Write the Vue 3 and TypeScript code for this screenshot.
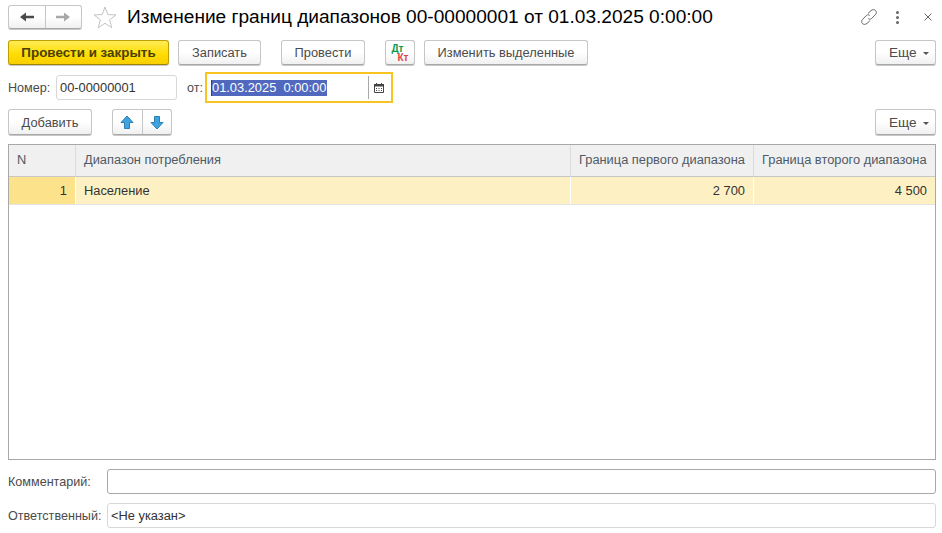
<script setup lang="ts">
interface Row { n: number; name: string; first: string; second: string }
const rows: Row[] = [{ n: 1, name: 'Население', first: '2 700', second: '4 500' }]
</script>

<template>
  <div class="page">
    <header class="title-row">
      <div class="nav">
        <button class="nav-btn">
          <svg width="16" height="12" viewBox="0 0 16 12"><path d="M1 6 L7 1.5 V4.8 H15 V7.2 H7 V10.5 Z" fill="#4a4a4a" /></svg>
        </button>
        <button class="nav-btn">
          <svg width="16" height="12" viewBox="0 0 16 12"><path d="M15 6 L9 1.5 V4.8 H1 V7.2 H9 V10.5 Z" fill="#a8a8a8" /></svg>
        </button>
      </div>
      <svg class="star" width="24" height="23" viewBox="0 0 24 23"><path d="M12 1 L14.8 8.6 L23 8.9 L16.6 13.9 L18.8 21.8 L12 17.3 L5.2 21.8 L7.4 13.9 L1 8.9 L9.2 8.6 Z" fill="#fff" stroke="#c4c4c4" stroke-width="1" /></svg>
      <h1 class="title">Изменение границ диапазонов 00-00000001 от 01.03.2025 0:00:00</h1>
      <div class="win-icons">
        <svg width="18" height="18" viewBox="0 0 18 18" fill="none" stroke="#666" stroke-width="1"><path d="M8 5.5 L11 2.6 C12.6 1.2 14.6 1.4 15.6 2.5 C16.7 3.7 16.6 5.5 15.4 6.7 L11.5 10.6 C10.4 11.6 9 11.4 8.3 10.4" /><path d="M10 12.5 L7 15.4 C5.4 16.8 3.4 16.6 2.4 15.5 C1.3 14.3 1.4 12.5 2.6 11.3 L6.5 7.4 C7.6 6.4 9 6.6 9.7 7.6" /></svg>
        <span class="dots"><i></i><i></i><i></i></span>
        <svg width="8" height="8" viewBox="0 0 8 8" stroke="#666" stroke-width="1"><path d="M0.5 0.5 L7.5 7.5 M7.5 0.5 L0.5 7.5" /></svg>
      </div>
    </header>

    <div class="toolbar cmd">
      <button class="btn primary">Провести и закрыть</button>
      <button class="btn save">Записать</button>
      <button class="btn post">Провести</button>
      <button class="btn dtkt"><span class="dt">Дт</span><span class="kt">Кт</span></button>
      <button class="btn change">Изменить выделенные</button>
      <button class="btn more">Еще<span class="caret"></span></button>
    </div>

    <div class="number-row">
      <label class="lbl num-lbl">Номер:</label>
      <div class="input number">00-00000001</div>
      <label class="lbl from">от:</label>
      <div class="date-focus">
        <div class="date-text"><span class="selected">01.03.2025&nbsp; 0:00:00</span></div>
        <span class="date-sep"></span>
        <svg class="cal" width="10" height="10" viewBox="0 0 10 10"><path d="M0.5 1.5 H9.5 V9.5 H0.5 Z" fill="#fff" stroke="#444" /><path d="M0 1 H10 V3.5 H0 Z M2 0 H3 V1 H2 Z M7 0 H8 V1 H7 Z" fill="#444" /><path d="M2 5 H3 V6 H2 Z M4.5 5 H5.5 V6 H4.5 Z M7 5 H8 V6 H7 Z M2 7 H3 V8 H2 Z M4.5 7 H5.5 V8 H4.5 Z M7 7 H8 V8 H7 Z" fill="#444" /></svg>
      </div>
    </div>

    <div class="toolbar table-bar">
      <button class="btn add">Добавить</button>
      <div class="updown">
        <button class="nav-btn ud">
          <svg width="14" height="15" viewBox="0 0 14 15"><path d="M7 1 L13 7.5 H9.5 V13.5 H4.5 V7.5 H1 Z" fill="#3fa3e0" stroke="#2b7fb5" stroke-width="1" /></svg>
        </button>
        <button class="nav-btn ud">
          <svg width="14" height="15" viewBox="0 0 14 15"><path d="M7 14 L13 7.5 H9.5 V1.5 H4.5 V7.5 H1 Z" fill="#3fa3e0" stroke="#2b7fb5" stroke-width="1" /></svg>
        </button>
      </div>
      <button class="btn more">Еще<span class="caret"></span></button>
    </div>

    <div class="grid">
      <div class="grid-row head">
        <div class="cell c-n">N</div>
        <div class="cell c-name">Диапазон потребления</div>
        <div class="cell c-a">Граница первого диапазона</div>
        <div class="cell c-b">Граница второго диапазона</div>
      </div>
      <div v-for="row in rows" :key="row.n" class="grid-row body">
        <div class="cell c-n num active">{{ row.n }}</div>
        <div class="cell c-name">{{ row.name }}</div>
        <div class="cell c-a num">{{ row.first }}</div>
        <div class="cell c-b num">{{ row.second }}</div>
      </div>
    </div>

    <div class="foot-row comment">
      <label class="lbl foot-lbl">Комментарий:</label>
      <div class="input wide dark"></div>
    </div>
    <div class="foot-row owner">
      <label class="lbl foot-lbl">Ответственный:</label>
      <div class="input wide">&lt;Не указан&gt;</div>
    </div>
  </div>
</template>

<style>
html, body { margin: 0; background: #fff; }
</style>

<style scoped>
.page {
  width: 942px;
  height: 533px;
  box-sizing: border-box;
  padding: 5px 6px 0 8px;
  overflow: hidden;
  font-family: "Liberation Sans", Arial, sans-serif;
  font-size: 12.85px;
  color: #4b4b4b;
  background: #fff;
}
.title-row { display: flex; align-items: center; height: 24px; }
.nav, .updown {
  display: flex;
  box-sizing: border-box;
  border: 1px solid #c6c6c6;
  border-bottom-color: #a8a8a8;
  border-radius: 3px;
  box-shadow: 0 1px 0 #c8c8c8;
  background: linear-gradient(#fff 50%, #f0f0f0);
}
.nav { width: 74px; height: 24px; }
.nav-btn {
  flex: 1;
  padding: 0;
  border: 0;
  background: none;
  display: flex;
  align-items: center;
  justify-content: center;
}
.nav-btn + .nav-btn { border-left: 1px solid #c6c6c6; }
.star { margin-left: 11px; flex: none; }
.title {
  margin: 0 0 0 10px;
  font-size: 19.1px;
  font-weight: 400;
  color: #000;
  white-space: nowrap;
  line-height: 24px;
}
.win-icons {
  margin-left: auto;
  margin-right: 4px;
  display: flex;
  align-items: center;
}
.dots { display: flex; flex-direction: column; gap: 2px; margin: 0 25px 0 18px; }
.dots i { display: block; width: 3px; height: 3px; border-radius: 50%; background: #666; }

.toolbar { display: flex; align-items: center; }
.cmd { margin-top: 11px; height: 25px; }
.table-bar { margin-top: 6px; height: 26px; }
.btn {
  box-sizing: border-box;
  height: 100%;
  padding: 0;
  border: 1px solid #c6c6c6;
  border-bottom-color: #a8a8a8;
  border-radius: 3px;
  box-shadow: 0 1px 0 #c8c8c8;
  background: linear-gradient(#fff 50%, #f0f0f0);
  font: inherit;
  color: #4b4b4b;
  white-space: nowrap;
}
.primary {
  width: 161px;
  border-color: #c0a000;
  border-bottom-color: #a08400;
  background: linear-gradient(#ffec55, #ffdc00 60%, #f8cf00);
  font-weight: 700;
  font-size: 13.4px;
  color: #4a4000;
}
.save { width: 83px; margin-left: 9px; }
.post { width: 84px; margin-left: 20px; }
.dtkt {
  width: 30px;
  margin-left: 20px;
  display: flex;
  flex-direction: column;
  align-items: center;
  justify-content: center;
  font-size: 10px;
  font-weight: 700;
  line-height: 9px;
}
.dt { color: #0a9a4a; margin-right: 5px; }
.kt { color: #e0474c; margin-left: 6px; }
.change { width: 164px; margin-left: 9px; }
.more { width: 61px; margin-left: auto; font-size: 13.6px; text-align: left; padding-left: 13px; }
.caret {
  display: inline-block;
  margin-left: 6px;
  vertical-align: 2px;
  border-left: 3px solid transparent;
  border-right: 3px solid transparent;
  border-top: 3px solid #555;
}

.number-row { display: flex; align-items: center; margin-top: 7px; height: 31px; }
.lbl { color: #4b4b4b; white-space: nowrap; font-size: 12.6px; }
.num-lbl { width: 48px; flex: none; }
.input {
  box-sizing: border-box;
  height: 25px;
  border: 1px solid #d8d8d8;
  border-radius: 3px;
  padding: 0 3px;
  line-height: 23px;
  color: #333;
  background: #fff;
}
.number { width: 121px; }
.from { margin-left: 10px; width: 18px; flex: none; }
.date-focus {
  box-sizing: border-box;
  width: 188px;
  height: 31px;
  border: 2px solid #f7c421;
  display: flex;
  align-items: center;
  padding: 0 0 0 5px;
}
.date-text { width: 156px; line-height: 16px; color: #fff; white-space: nowrap; }
.selected { display: inline-block; background: #5069bf; height: 16px; padding-right: 1px; box-shadow: -1px 0 0 #444; }
.date-sep { width: 1px; height: 23px; background: #a8a8a8; }
.cal { margin-left: 5px; }

.add { width: 84px; }
.updown { width: 60px; height: 26px; margin-left: 20px; }

.grid {
  box-sizing: border-box;
  height: 316px;
  margin-top: 9px;
  border: 1px solid #a8a8a8;
}
.grid-row { display: flex; }
.head { height: 32px; background: #f0f0f0; border-bottom: 1px solid #c8c8c8; box-sizing: border-box; color: #4f5a66; }
.body { height: 28px; background: #fdf1c3; border-bottom: 1px solid #e4e4e4; box-sizing: border-box; color: #333; }
.cell {
  box-sizing: border-box;
  padding: 0 8px;
  border-right: 1px solid #dcdcdc;
  white-space: nowrap;
  overflow: hidden;
}
.head .cell { line-height: 29px; }
.body .cell { border-right-color: #fff; line-height: 28px; }
.c-n { width: 67px; }
.c-name { width: 495px; }
.c-a { width: 183px; }
.c-b { flex: 1; border-right: 0; }
.num { text-align: right; }
.active { background: #fde28c; }

.foot-row { display: flex; align-items: center; height: 25px; }
.comment { margin-top: 9px; }
.owner { margin-top: 9px; }
.foot-lbl { width: 99px; flex: none; }
.wide { flex: 1; }
.dark { border-color: #a8a8a8; }
</style>
